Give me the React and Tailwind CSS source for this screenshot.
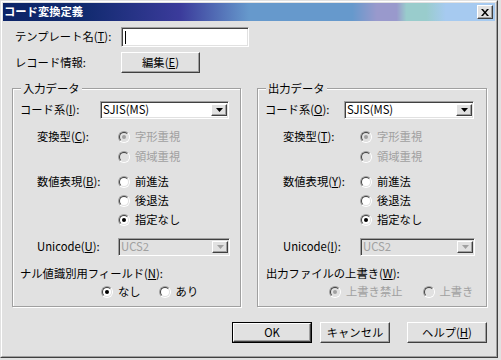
const FACE = 'bg-[#e1e1e1]';

function U({ children }) {
  return <span className="underline underline-offset-[1px]">{children}</span>;
}

function Radio({ checked = false, disabled = false }) {
  return (
    <span className="inline-block w-[12px] h-[12px] shrink-0 rounded-full border border-t-[#a0a0a0] border-l-[#a0a0a0] border-r-white border-b-white">
      <span
        className={`flex items-center justify-center w-full h-full rounded-full border border-t-[#404040] border-l-[#404040] border-r-[#e1e1e1] border-b-[#e1e1e1] ${
          disabled ? 'bg-[#e1e1e1]' : 'bg-white'
        }`}
      >
        {checked && (
          <span className={`block w-[4px] h-[4px] rounded-full ${disabled ? 'bg-[#a0a0a0]' : 'bg-black'}`} />
        )}
      </span>
    </span>
  );
}

function RadioItem({ label, checked, disabled }) {
  return (
    <span className="flex items-center gap-[5px]">
      <Radio checked={checked} disabled={disabled} />
      <span className={disabled ? 'text-[#a0a0a0]' : 'text-black'}>{label}</span>
    </span>
  );
}

function Select({ value, className = '', disabled = false }) {
  return (
    <div
      className={`flex items-center h-[18px] border border-t-[#a0a0a0] border-l-[#a0a0a0] border-r-white border-b-white shadow-[inset_1px_1px_0_#404040,inset_-1px_-1px_0_#e1e1e1] ${
        disabled ? 'bg-[#e1e1e1] text-[#a0a0a0]' : 'bg-white text-black'
      } ${className}`}
    >
      <span className="flex-1 pl-[2px]">{value}</span>
      <span className="flex items-center justify-center w-[16px] h-[12px] mr-[1px] bg-[#e1e1e1] border border-t-white border-l-white border-r-[#404040] border-b-[#404040] shadow-[inset_-1px_-1px_0_#a0a0a0]">
        <svg width="7" height="4" viewBox="0 0 7 4">
          <path d="M0 0h7L3.5 4z" fill={disabled ? '#a0a0a0' : '#000'} />
        </svg>
      </span>
    </div>
  );
}

function Button({ children, className = '', isDefault = false }) {
  const inner = (
    <div className="flex items-center justify-center w-full h-full bg-[#e1e1e1] border border-t-white border-l-white border-r-[#404040] border-b-[#404040] shadow-[inset_-1px_-1px_0_#a0a0a0]">
      {children}
    </div>
  );
  if (isDefault) {
    return <div className={`h-[21px] border border-black ${className}`}>{inner}</div>;
  }
  return <div className={`h-[21px] ${className}`}>{inner}</div>;
}

function Group({ title, className = '', children }) {
  return (
    <div className={`relative h-[219px] border border-[#a0a0a0] shadow-[inset_1px_1px_0_white,1px_1px_0_white] ${className}`}>
      <span className={`absolute -top-[8px] left-[8px] px-[2px] leading-[14px] ${FACE}`}>{title}</span>
      <div className="flex flex-col pt-[11px]">{children}</div>
    </div>
  );
}

export default function App() {
  return (
    <div
      className={`w-[501px] h-[360px] ${FACE} text-[11.3px] leading-none text-black`}
      style={{ fontFamily: '"Noto Sans CJK JP", "Liberation Sans", sans-serif' }}
    >
      <div className="w-[498px] h-[358px] border border-t-[#e1e1e1] border-l-[#e1e1e1] border-r-[#404040] border-b-[#404040]">
        <div className="w-full h-full border border-t-white border-l-white border-r-[#a0a0a0] border-b-[#a0a0a0] p-[1px] flex flex-col">
          {/* title bar */}
          <div className="flex items-center h-[18px] bg-[linear-gradient(to_right,#0c2468_0%,#102a6e_16%,#3b3b9b_36%,#6699cc_50%,#6699cc_71%,#9999cc_76%,#9999cc_80%,#99cccc_82%,#99cccc_86%,#a6caf0_90%,#a6caf0_100%)]">
            <span className="pl-[1px] flex-1 text-white font-bold">コード変換定義</span>
            <span className="flex items-center justify-center w-[16px] h-[14px] mr-[2px] bg-[#e1e1e1] border border-t-white border-l-white border-r-[#404040] border-b-[#404040] shadow-[inset_-1px_-1px_0_#a0a0a0]">
              <svg width="8" height="7" viewBox="0 0 8 7">
                <path d="M0 0h2l2 2.5L6 0h2L5 3.5 8 7H6L4 4.5 2 7H0l3-3.5z" fill="#000" />
              </svg>
            </span>
          </div>

          {/* template name */}
          <div className="flex items-center mt-[6px] pl-[12px]">
            <span className="w-[106px]">
              テンプレート名(<U>T</U>):
            </span>
            <div className="flex items-center w-[128px] h-[20px] bg-white border border-t-[#a0a0a0] border-l-[#a0a0a0] border-r-white border-b-white shadow-[inset_1px_1px_0_#404040,inset_-1px_-1px_0_#e1e1e1]">
              <span className="ml-[3px] w-[1px] h-[13px] bg-black" />
            </div>
          </div>

          {/* record info */}
          <div className="flex items-center mt-[5px] pl-[12px]">
            <span className="w-[106px]">レコード情報:</span>
            <Button className="w-[79px]">
              編集(<U>E</U>)
            </Button>
          </div>

          {/* groups */}
          <div className="flex mt-[15px] pl-[9px] gap-[16px]">
            <Group title="入力データ" className="w-[229px]">
              <div className="flex items-center h-[20px] pl-[7px]">
                <span className="w-[80px]">
                  コード系(<U>I</U>):
                </span>
                <Select value="SJIS(MS)" className="w-[129px]" />
              </div>
              <div className="flex items-center h-[20px] mt-[7px] pl-[24px]">
                <span className="w-[81px]">
                  変換型(<U>C</U>):
                </span>
                <RadioItem label="字形重視" checked disabled />
              </div>
              <div className="flex items-center h-[20px] pl-[105px]">
                <RadioItem label="領域重視" disabled />
              </div>
              <div className="flex items-center h-[19px] mt-[5px] pl-[24px]">
                <span className="w-[81px]">
                  数値表現(<U>B</U>):
                </span>
                <RadioItem label="前進法" />
              </div>
              <div className="flex items-center h-[19px] pl-[105px]">
                <RadioItem label="後退法" />
              </div>
              <div className="flex items-center h-[19px] pl-[105px]">
                <RadioItem label="指定なし" checked />
              </div>
              <div className="flex items-center h-[20px] mt-[8px] pl-[24px]">
                <span className="w-[81px]">
                  Unicode(<U>U</U>):
                </span>
                <Select value="UCS2" className="w-[112px]" disabled />
              </div>
              <div className="flex items-center h-[18px] mt-[8px] pl-[7px]">
                ナル値識別用フィールド(<U>N</U>):
              </div>
              <div className="flex items-center h-[18px] pl-[88px] gap-[18px]">
                <RadioItem label="なし" checked />
                <RadioItem label="あり" />
              </div>
            </Group>

            <Group title="出力データ" className="w-[230px]">
              <div className="flex items-center h-[20px] pl-[7px]">
                <span className="w-[79px]">
                  コード系(<U>O</U>):
                </span>
                <Select value="SJIS(MS)" className="w-[130px]" />
              </div>
              <div className="flex items-center h-[20px] mt-[7px] pl-[25px]">
                <span className="w-[77px]">
                  変換型(<U>T</U>):
                </span>
                <RadioItem label="字形重視" checked disabled />
              </div>
              <div className="flex items-center h-[20px] pl-[102px]">
                <RadioItem label="領域重視" disabled />
              </div>
              <div className="flex items-center h-[19px] mt-[5px] pl-[25px]">
                <span className="w-[77px]">
                  数値表現(<U>Y</U>):
                </span>
                <RadioItem label="前進法" />
              </div>
              <div className="flex items-center h-[19px] pl-[102px]">
                <RadioItem label="後退法" />
              </div>
              <div className="flex items-center h-[19px] pl-[102px]">
                <RadioItem label="指定なし" checked />
              </div>
              <div className="flex items-center h-[20px] mt-[8px] pl-[25px]">
                <span className="w-[77px]">
                  Unicode(<U>I</U>):
                </span>
                <Select value="UCS2" className="w-[115px]" disabled />
              </div>
              <div className="flex items-center h-[18px] mt-[8px] pl-[8px]">
                出力ファイルの上書き(<U>W</U>):
              </div>
              <div className="flex items-center h-[18px] pl-[71px] gap-[20px]">
                <RadioItem label="上書き禁止" checked disabled />
                <RadioItem label="上書き" disabled />
              </div>
            </Group>
          </div>

          {/* buttons */}
          <div className="flex mt-[15px] pl-[229px]">
            <Button className="w-[80px]" isDefault>
              OK
            </Button>
            <Button className="w-[70px] ml-[8px]">キャンセル</Button>
            <Button className="w-[80px] ml-[17px]">
              ヘルプ(<U>H</U>)
            </Button>
          </div>
        </div>
      </div>
    </div>
  );
}
